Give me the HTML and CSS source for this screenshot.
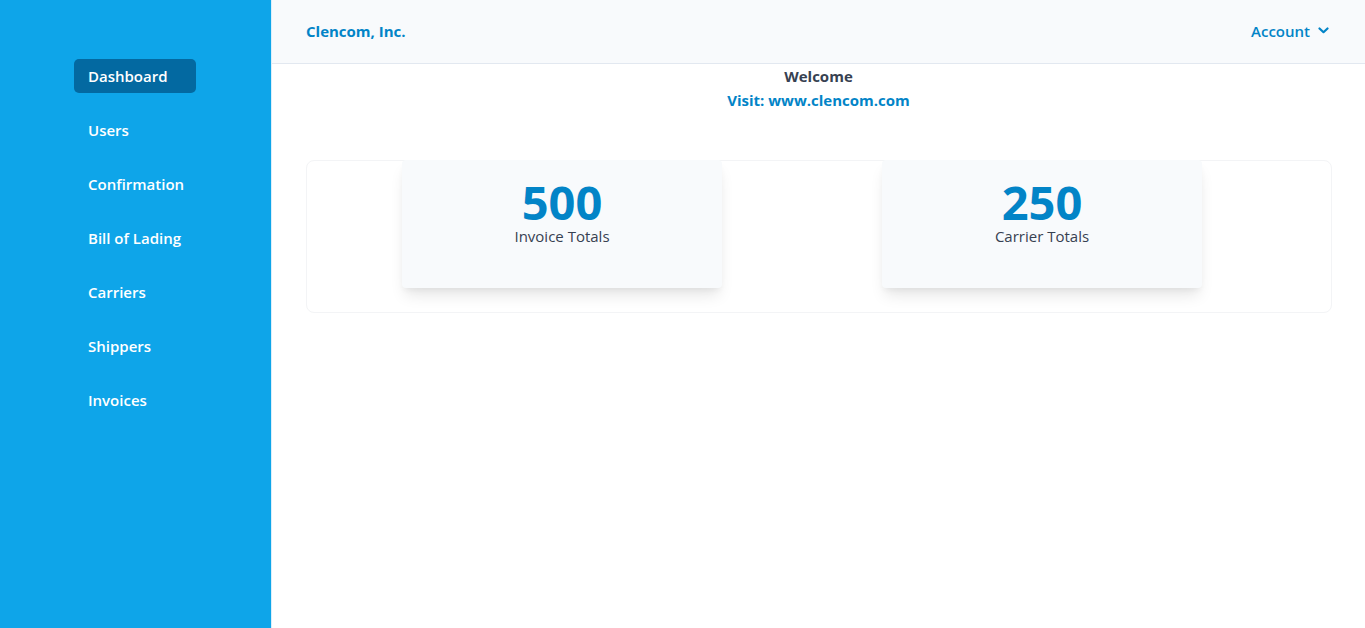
FILE: index.html
```html
<!DOCTYPE html>
<html lang="en">
<head>
  <meta charset="UTF-8" />
  <meta name="viewport" content="width=device-width, initial-scale=1.0"/>
  <title>Dashboard | Clencom</title>
  <link rel="stylesheet" href="styles.css">
</head>
<body>

  <aside class="sidebar">
    <nav class="side-nav">
      <a href="#" class="active">Dashboard</a>
      <a href="#">Users</a>
      <a href="#">Confirmation</a>
      <a href="#">Bill of Lading</a>
      <a href="#">Carriers</a>
      <a href="#">Shippers</a>
      <a href="#">Invoices</a>
    </nav>
  </aside>

  <div class="main">
    <header class="topbar">
      <a href="#" class="brand">Clencom, Inc.</a>
      <a href="#" class="account">
        Account
        <svg width="11" height="7" viewBox="0 0 11 7" fill="none" stroke="currentColor" stroke-width="2.2" stroke-linecap="round" stroke-linejoin="round">
          <path d="M1.5 1.5 L5.5 5.2 L9.5 1.5"/>
        </svg>
      </a>
    </header>

    <section class="welcome">
      <p class="welcome-title">Welcome</p>
      <a href="#" class="welcome-link">Visit: www.clencom.com</a>
    </section>

    <section class="panel">
      <div class="stat-card">
        <div class="stat-number">500</div>
        <div class="stat-label">Invoice Totals</div>
      </div>
      <div class="stat-card">
        <div class="stat-number">250</div>
        <div class="stat-label">Carrier Totals</div>
      </div>
    </section>
  </div>

</body>
</html>
```

FILE: styles.css
```css
:root {
  --sky: #0ea5e9;
  --sky-dark: #0369a1;
  --link: #0284c7;
  --text: #374151;
  --slate-bg: #f8fafc;
  --border: #e5e7eb;
}

* {
  box-sizing: border-box;
}

body {
  margin: 0;
  display: flex;
  min-height: 100vh;
  font-family: "Open Sans", "Noto Sans", sans-serif;
  color: var(--text);
  background-color: white;
}

a {
  text-decoration: none;
}

.sidebar {
  width: 272px;
  flex-shrink: 0;
  background-color: var(--sky);
  border-right: 1px solid #dbeefa;
  padding: 59px 0 0 74px;
}

.side-nav {
  display: flex;
  flex-direction: column;
  gap: 20px;
  width: 122px;
}

.side-nav a {
  display: block;
  color: white;
  font-size: 15px;
  font-weight: 600;
  line-height: 20px;
  padding: 7px 14px;
  border-radius: 5px;
  white-space: nowrap;
}

.side-nav a.active {
  background-color: var(--sky-dark);
}

.main {
  flex: 1;
  display: flex;
  flex-direction: column;
}

.topbar {
  height: 64px;
  background-color: var(--slate-bg);
  border-bottom: 1px solid #e2e8f0;
  display: flex;
  align-items: center;
  justify-content: space-between;
  padding: 0 36px 2px 34px;
}

.brand {
  color: var(--link);
  font-size: 15px;
  font-weight: 700;
}

.account {
  color: var(--link);
  font-size: 15px;
  font-weight: 600;
  display: flex;
  align-items: center;
  gap: 8px;
}

.welcome {
  text-align: center;
  padding-top: 2px;
}

.welcome-title {
  margin: 0;
  font-size: 15px;
  font-weight: 700;
  line-height: 20px;
  color: var(--text);
}

.welcome-link {
  display: block;
  margin-top: 4px;
  color: var(--link);
  font-size: 15px;
  font-weight: 700;
  line-height: 20px;
}

.panel {
  margin: 50px 33px 0 34px;
  border: 1px solid #f3f4f6;
  border-radius: 8px;
  display: flex;
  gap: 160px;
  padding: 0 0 24px 95px;
}

.stat-card {
  width: 320px;
  height: 128px;
  margin-top: -1px;
  background-color: var(--slate-bg);
  border-radius: 4px;
  box-shadow: 0 10px 15px -3px rgba(0, 0, 0, 0.1), 0 4px 6px -2px rgba(0, 0, 0, 0.05);
  text-align: center;
  padding-top: 19px;
}

.stat-number {
  color: var(--link);
  font-size: 47px;
  font-weight: 700;
  line-height: 46px;
}

.stat-label {
  margin-top: 1px;
  font-size: 15px;
  line-height: 20px;
  color: var(--text);
}
```
